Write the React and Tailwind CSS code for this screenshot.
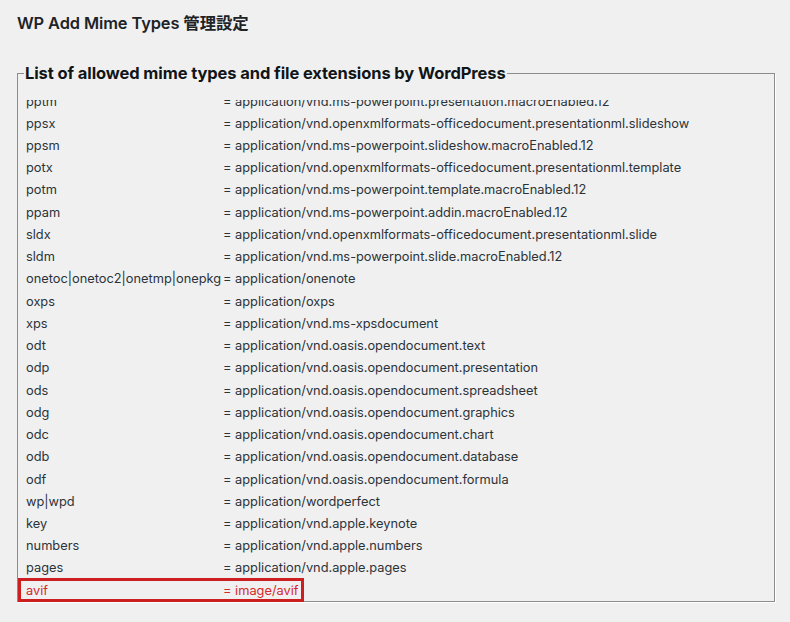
import React from "react";

const rows = [
  ["pptm", "application/vnd.ms-powerpoint.presentation.macroEnabled.12"],
  ["ppsx", "application/vnd.openxmlformats-officedocument.presentationml.slideshow"],
  ["ppsm", "application/vnd.ms-powerpoint.slideshow.macroEnabled.12"],
  ["potx", "application/vnd.openxmlformats-officedocument.presentationml.template"],
  ["potm", "application/vnd.ms-powerpoint.template.macroEnabled.12"],
  ["ppam", "application/vnd.ms-powerpoint.addin.macroEnabled.12"],
  ["sldx", "application/vnd.openxmlformats-officedocument.presentationml.slide"],
  ["sldm", "application/vnd.ms-powerpoint.slide.macroEnabled.12"],
  ["onetoc|onetoc2|onetmp|onepkg", "application/onenote"],
  ["oxps", "application/oxps"],
  ["xps", "application/vnd.ms-xpsdocument"],
  ["odt", "application/vnd.oasis.opendocument.text"],
  ["odp", "application/vnd.oasis.opendocument.presentation"],
  ["ods", "application/vnd.oasis.opendocument.spreadsheet"],
  ["odg", "application/vnd.oasis.opendocument.graphics"],
  ["odc", "application/vnd.oasis.opendocument.chart"],
  ["odb", "application/vnd.oasis.opendocument.database"],
  ["odf", "application/vnd.oasis.opendocument.formula"],
  ["wp|wpd", "application/wordperfect"],
  ["key", "application/vnd.apple.keynote"],
  ["numbers", "application/vnd.apple.numbers"],
  ["pages", "application/vnd.apple.pages"],
  ["avif", "image/avif", true],
];

export default function App() {
  return (
    <div className="min-h-[622px] bg-[#f0f0f1] text-[#1d2327] px-[17px] pt-[12px] font-['Inter','Liberation_Sans',sans-serif]">
      <h1 className="text-[16.4px] leading-[22px] font-semibold tracking-[-0.1px] font-['Inter','Noto_Sans_CJK_JP',sans-serif]">
        WP Add Mime Types 管理設定
      </h1>
      <div className="relative mt-[28px] w-[758px]">
        <div className="h-[22px] flex items-center">
          <div className="w-[7px] h-[1px] bg-[#8c8c8c] self-center mt-[1px]" />
          <div className="text-[16.5px] font-bold leading-[22px] px-[1px] text-[#101517] tracking-[-0.1px]">
            List of allowed mime types and file extensions by WordPress
          </div>
          <div className="flex-1 h-[1px] bg-[#8c8c8c] mt-[1px]" />
        </div>
        <div className="-mt-[11px] h-[529px] border border-[#8c8c8c] border-t-0 shadow-[1px_1px_0_#ffffff] pt-[27px] px-[8px]">
          <div className="h-[500px] overflow-hidden">
            <div className="-mt-[10px] text-[12.8px] text-[#2c3338]">
              {rows.map(([k, v, red]) => (
                <div key={k} className={"flex h-[22.24px] items-center " + (red ? "text-[#d42a2a]" : "")}>
                  <div className="w-[197px] shrink-0">{k}</div>
                  <div>= {v}</div>
                </div>
              ))}
            </div>
          </div>
        </div>
        <div className="absolute left-[1px] top-[516px] w-[286px] h-[24px] border-[3px] border-[#cc1f1f]" />
      </div>
    </div>
  );
}
